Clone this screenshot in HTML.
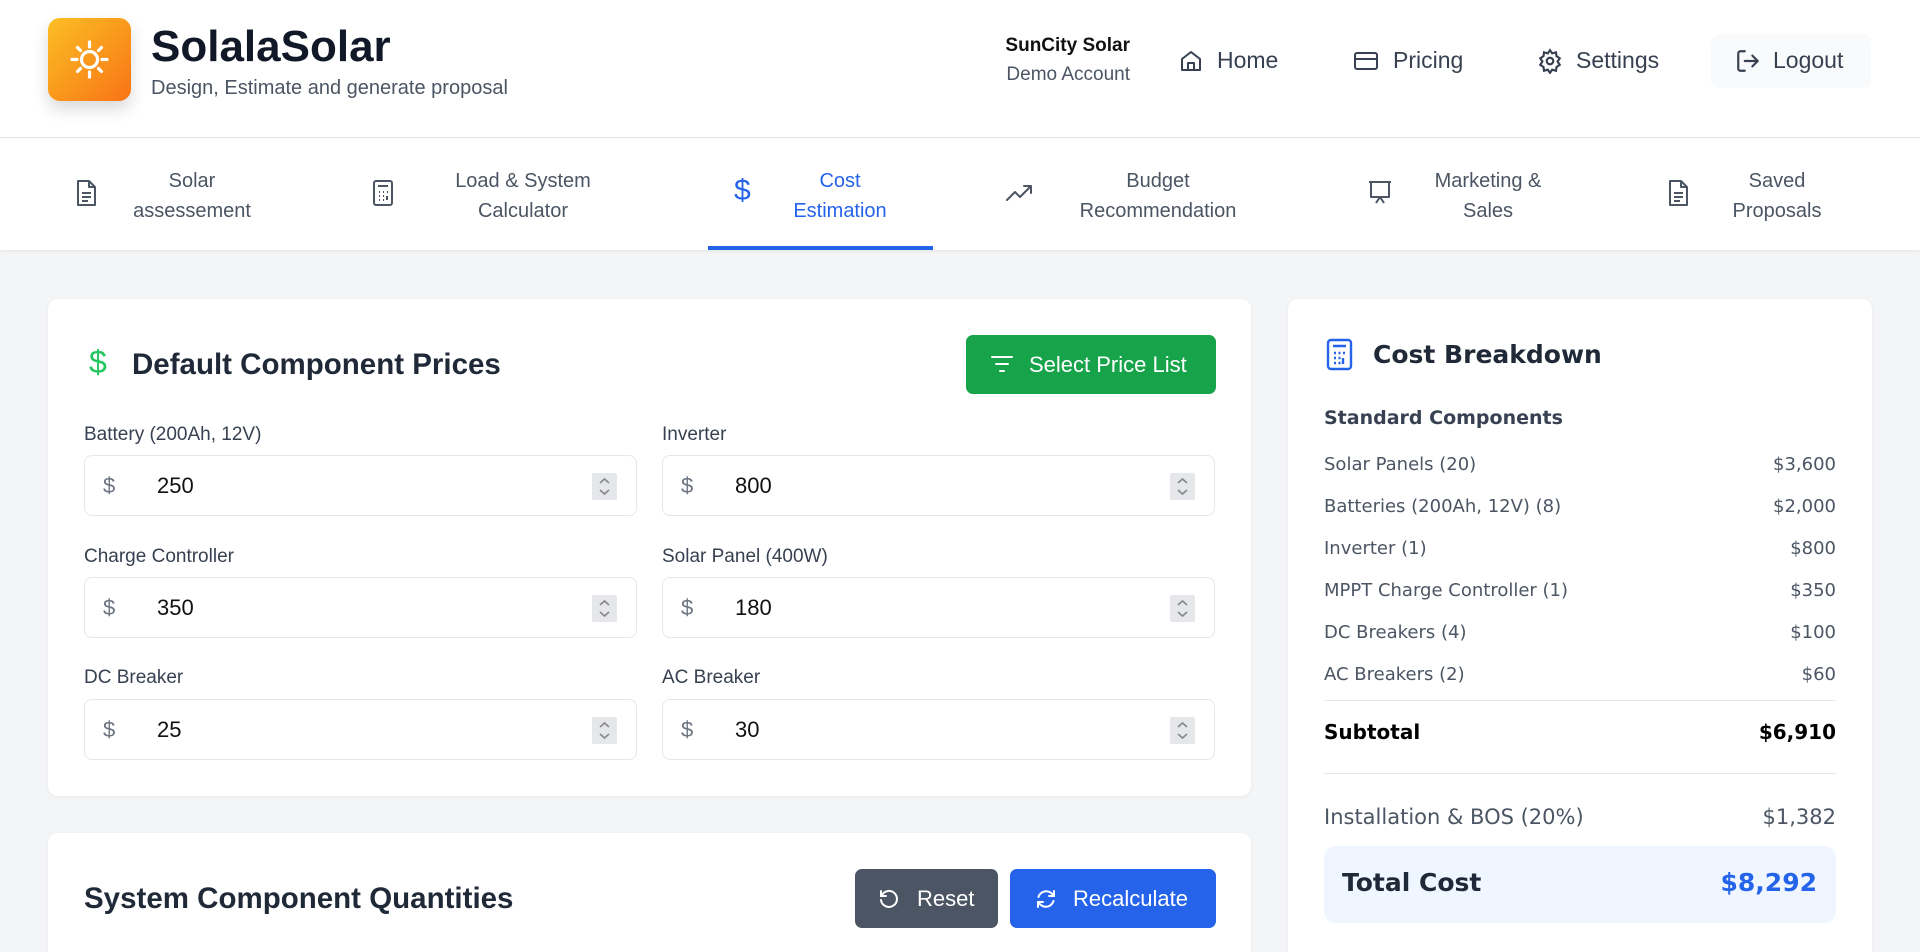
<!DOCTYPE html>
<html><head><meta charset="utf-8"><style>
*{box-sizing:border-box;margin:0;padding:0}
html,body{width:1920px;height:952px;overflow:hidden}
body{background:#f4f5f7;font-family:"Liberation Sans",sans-serif;color:#1f2937;position:relative}
.a{position:absolute}
.hdr{left:0;top:0;width:1920px;height:138px;background:#fff;border-bottom:1px solid #e5e7eb}
.nav{left:0;top:138px;width:1920px;height:112px;background:#fff;box-shadow:0 1px 3px rgba(0,0,0,.08)}
.tab{position:absolute;top:28px;font-size:20px;line-height:30px;color:#4b5563;text-align:center;transform:translateX(-50%);white-space:nowrap}
.ico{position:absolute;top:41px}
.card{background:#fff;border-radius:10px;box-shadow:0 1px 3px rgba(0,0,0,.06)}
.lbl{font-size:19px;color:#374151}
.inp{position:absolute;width:553px;height:61px;border:1px solid #e5e7eb;border-radius:8px;background:#fff}
.inp .d{position:absolute;left:18px;top:17px;font-size:22px;color:#6b7280}
.inp .v{position:absolute;left:72px;top:17px;font-size:22px;color:#111}
.inp .s{position:absolute;right:19px;top:17px;width:25px;height:27px;background:#e5e7eb;border-radius:2px}
.inp .s svg{display:block}
.row{position:absolute;left:1324px;width:512px;font-family:"DejaVu Sans",sans-serif;font-size:18px;color:#4b5563;display:flex;justify-content:space-between}
</style></head><body>
<div class="a hdr"></div>
<div class="a" style="left:48px;top:18px;width:83px;height:83px;border-radius:12px;background:linear-gradient(135deg,#fbbf24,#f97316);box-shadow:0 8px 16px rgba(0,0,0,.15)">
<svg width="83" height="83" viewBox="0 0 83 83" fill="none" stroke="#fff" stroke-width="3.2" stroke-linecap="round"><circle cx="41.5" cy="41.5" r="8"/><path d="M41.5 24v5M41.5 54v5M24 41.5h5M54 41.5h5M29.5 29.5l3 3M50.5 50.5l3 3M29.5 53.5l3-3M50.5 32.5l3-3"/></svg></div>
<div class="a" style="left:151px;top:22px;font-size:44px;font-weight:bold;color:#111827">SolalaSolar</div>
<div class="a" style="left:151px;top:77px;font-size:20px;color:#4b5563">Design, Estimate and generate proposal</div>
<div class="a" style="right:790px;top:35px;font-size:19px;font-weight:bold;color:#111;text-align:right">SunCity Solar</div>
<div class="a" style="right:790px;top:64px;font-size:19px;color:#4b5563;text-align:right">Demo Account</div>
<svg class="a" style="left:1179px;top:49px" width="24" height="24" viewBox="0 0 24 24" fill="none" stroke="#374151" stroke-width="2" stroke-linejoin="round"><path d="M3 10l9-7 9 7v11H3zM9 21v-7h6v7"/></svg>
<div class="a" style="left:1217px;top:47px;font-size:23px;color:#374151">Home</div>
<svg class="a" style="left:1353px;top:49px" width="26" height="24" viewBox="0 0 26 24" fill="none" stroke="#374151" stroke-width="2"><rect x="2" y="4" width="22" height="16" rx="2"/><path d="M2 10h22"/></svg>
<div class="a" style="left:1393px;top:47px;font-size:23px;color:#374151">Pricing</div>
<svg class="a" style="left:1537px;top:48px" width="26" height="26" viewBox="0 0 24 24" fill="none" stroke="#374151" stroke-width="2"><circle cx="12" cy="12" r="3"/><path d="M12 2l2 3 3.5-1 .5 3.5 3 2-2 3 2 3-3 2-.5 3.5-3.5-1-2 3-2-3-3.5 1-.5-3.5-3-2 2-3-2-3 3-2 .5-3.5 3.5 1z"/></svg>
<div class="a" style="left:1576px;top:47px;font-size:23px;color:#374151">Settings</div>
<div class="a" style="left:1711px;top:34px;width:160px;height:54px;border-radius:8px;background:#f9fafb"></div>
<svg class="a" style="left:1735px;top:48px" width="26" height="26" viewBox="0 0 24 24" fill="none" stroke="#374151" stroke-width="2" stroke-linecap="round" stroke-linejoin="round"><path d="M9 21H5a2 2 0 0 1-2-2V5a2 2 0 0 1 2-2h4M16 17l5-5-5-5M21 12H9"/></svg>
<div class="a" style="left:1773px;top:47px;font-size:23px;color:#374151">Logout</div>

<div class="a nav">
<svg class="ico" style="left:74px" width="24" height="28" viewBox="0 0 24 28" fill="none" stroke="#4b5563" stroke-width="2" stroke-linejoin="round"><path d="M4 2h11l6 6v18H4zM15 2v6h6M8 14h9M8 18h9M8 22h6"/></svg>
<div class="tab" style="left:192px">Solar<br>assessement</div>
<svg class="ico" style="left:371px" width="24" height="28" viewBox="0 0 24 28" fill="none" stroke="#4b5563" stroke-width="2"><rect x="3" y="2" width="18" height="24" rx="2"/><path d="M7 7h10M8 13h1M12 13h1M16 13h1M8 17h1M12 17h1M16 17v4M8 21h1M12 21h1"/></svg>
<div class="tab" style="left:523px">Load &amp; System<br>Calculator</div>
<div class="ico" style="left:734px;top:36px;font-size:30px;color:#2563eb">$</div>
<div class="tab" style="left:840px;color:#2563eb">Cost<br>Estimation</div>
<div class="a" style="left:708px;top:108px;width:225px;height:4px;background:#2563eb"></div>
<svg class="ico" style="left:1005px;top:44px" width="30" height="22" viewBox="0 0 30 22" fill="none" stroke="#4b5563" stroke-width="2" stroke-linecap="round" stroke-linejoin="round"><path d="M2 18l8-8 5 5 11-11M19 4h7v7"/></svg>
<div class="tab" style="left:1158px">Budget<br>Recommendation</div>
<svg class="ico" style="left:1366px" width="28" height="28" viewBox="0 0 28 28" fill="none" stroke="#4b5563" stroke-width="2" stroke-linejoin="round"><path d="M3 3h22M5 3v15h18V3M14 18l-4 6M14 18l4 6"/></svg>
<div class="tab" style="left:1488px">Marketing &amp;<br>Sales</div>
<svg class="ico" style="left:1666px" width="24" height="28" viewBox="0 0 24 28" fill="none" stroke="#4b5563" stroke-width="2" stroke-linejoin="round"><path d="M4 2h11l6 6v18H4zM15 2v6h6M8 14h9M8 18h9M8 22h6"/></svg>
<div class="tab" style="left:1777px">Saved<br>Proposals</div>
</div>

<div class="a card" style="left:48px;top:299px;width:1203px;height:497px"></div>
<div class="a" style="left:89px;top:344px;font-size:32px;color:#22c55e">$</div>
<div class="a" style="left:132px;top:348px;font-size:29.5px;font-weight:bold;color:#1f2937">Default Component Prices</div>
<div class="a" style="left:966px;top:335px;width:250px;height:59px;border-radius:7px;background:#16a34a;color:#fff;font-size:22px;line-height:59px;padding-left:63px">Select Price List</div>
<svg class="a" style="left:990px;top:354px" width="24" height="20" viewBox="0 0 24 20" stroke="#fff" stroke-width="2" stroke-linecap="round"><path d="M2 3h20M6 10h12M10 17h4"/></svg>

<div class="a lbl" style="left:84px;top:424px">Battery (200Ah, 12V)</div>
<div class="a lbl" style="left:662px;top:424px">Inverter</div>
<div class="inp" style="left:84px;top:455px"><span class="d">$</span><span class="v">250</span><span class="s"><svg width="25" height="27" viewBox="0 0 25 27" fill="none" stroke="#888" stroke-width="1.6"><path d="M8 10l4.5-4 4.5 4M8 17l4.5 4 4.5-4"/></svg></span></div>
<div class="inp" style="left:662px;top:455px"><span class="d">$</span><span class="v">800</span><span class="s"><svg width="25" height="27" viewBox="0 0 25 27" fill="none" stroke="#888" stroke-width="1.6"><path d="M8 10l4.5-4 4.5 4M8 17l4.5 4 4.5-4"/></svg></span></div>
<div class="a lbl" style="left:84px;top:546px">Charge Controller</div>
<div class="a lbl" style="left:662px;top:546px">Solar Panel (400W)</div>
<div class="inp" style="left:84px;top:577px"><span class="d">$</span><span class="v">350</span><span class="s"><svg width="25" height="27" viewBox="0 0 25 27" fill="none" stroke="#888" stroke-width="1.6"><path d="M8 10l4.5-4 4.5 4M8 17l4.5 4 4.5-4"/></svg></span></div>
<div class="inp" style="left:662px;top:577px"><span class="d">$</span><span class="v">180</span><span class="s"><svg width="25" height="27" viewBox="0 0 25 27" fill="none" stroke="#888" stroke-width="1.6"><path d="M8 10l4.5-4 4.5 4M8 17l4.5 4 4.5-4"/></svg></span></div>
<div class="a lbl" style="left:84px;top:667px">DC Breaker</div>
<div class="a lbl" style="left:662px;top:667px">AC Breaker</div>
<div class="inp" style="left:84px;top:699px"><span class="d">$</span><span class="v">25</span><span class="s"><svg width="25" height="27" viewBox="0 0 25 27" fill="none" stroke="#888" stroke-width="1.6"><path d="M8 10l4.5-4 4.5 4M8 17l4.5 4 4.5-4"/></svg></span></div>
<div class="inp" style="left:662px;top:699px"><span class="d">$</span><span class="v">30</span><span class="s"><svg width="25" height="27" viewBox="0 0 25 27" fill="none" stroke="#888" stroke-width="1.6"><path d="M8 10l4.5-4 4.5 4M8 17l4.5 4 4.5-4"/></svg></span></div>

<div class="a card" style="left:48px;top:833px;width:1203px;height:119px;border-radius:10px 10px 0 0"></div>
<div class="a" style="left:84px;top:882px;font-size:29.5px;font-weight:bold;color:#1f2937">System Component Quantities</div>
<div class="a" style="left:855px;top:869px;width:143px;height:59px;border-radius:7px;background:#4b5563;color:#fff;font-size:22px;line-height:59px;padding-left:62px">Reset</div>
<svg class="a" style="left:877px;top:887px" width="24" height="24" viewBox="0 0 24 24" fill="none" stroke="#fff" stroke-width="2" stroke-linecap="round"><path d="M4 4v5h5"/><path d="M4.5 9A8 8 0 1 1 4 13"/></svg>
<div class="a" style="left:1010px;top:869px;width:206px;height:59px;border-radius:7px;background:#2563eb;color:#fff;font-size:22px;line-height:59px;padding-left:63px">Recalculate</div>
<svg class="a" style="left:1034px;top:887px" width="24" height="24" viewBox="0 0 24 24" fill="none" stroke="#fff" stroke-width="2" stroke-linecap="round"><path d="M20 4v5h-5M4 20v-5h5"/><path d="M19.5 9A8 8 0 0 0 4.5 10M4.5 15a8 8 0 0 0 15-1"/></svg>

<div class="a card" style="left:1288px;top:299px;width:584px;height:653px;border-radius:10px 10px 0 0"></div>
<svg class="a" style="left:1326px;top:338px" width="27" height="33" viewBox="0 0 27 33" fill="none" stroke="#2563eb" stroke-width="2.4"><rect x="2" y="2" width="23" height="29" rx="3"/><path d="M7 8h13M8 15h2M12.5 15h2M17 15h2M8 20h2M12.5 20h2M17 20v6M8 25h2M12.5 25h2"/></svg>
<div class="a" style="left:1373px;top:340px;font-family:'DejaVu Sans',sans-serif;font-size:25px;font-weight:bold;color:#1f2937">Cost Breakdown</div>
<div class="a" style="left:1324px;top:407px;font-family:'DejaVu Sans',sans-serif;font-size:19px;font-weight:bold;color:#374151">Standard Components</div>
<div class="row" style="top:454px"><span>Solar Panels (20)</span><span>$3,600</span></div>
<div class="row" style="top:496px"><span>Batteries (200Ah, 12V) (8)</span><span>$2,000</span></div>
<div class="row" style="top:538px"><span>Inverter (1)</span><span>$800</span></div>
<div class="row" style="top:580px"><span>MPPT Charge Controller (1)</span><span>$350</span></div>
<div class="row" style="top:622px"><span>DC Breakers (4)</span><span>$100</span></div>
<div class="row" style="top:664px"><span>AC Breakers (2)</span><span>$60</span></div>
<div class="a" style="left:1324px;top:700px;width:512px;height:1px;background:#e5e7eb"></div>
<div class="row" style="top:720px;font-size:20px;font-weight:bold;color:#000"><span>Subtotal</span><span>$6,910</span></div>
<div class="a" style="left:1324px;top:773px;width:512px;height:1px;background:#e5e7eb"></div>
<div class="row" style="top:805px;font-size:21px"><span>Installation &amp; BOS (20%)</span><span>$1,382</span></div>
<div class="a" style="left:1324px;top:846px;width:512px;height:77px;border-radius:12px;background:#eff6ff"></div>
<div class="row" style="top:868px;left:1342px;width:475px;font-size:25px;font-weight:bold;color:#1f2937"><span>Total Cost</span><span style="color:#2563eb">$8,292</span></div>
</body></html>
